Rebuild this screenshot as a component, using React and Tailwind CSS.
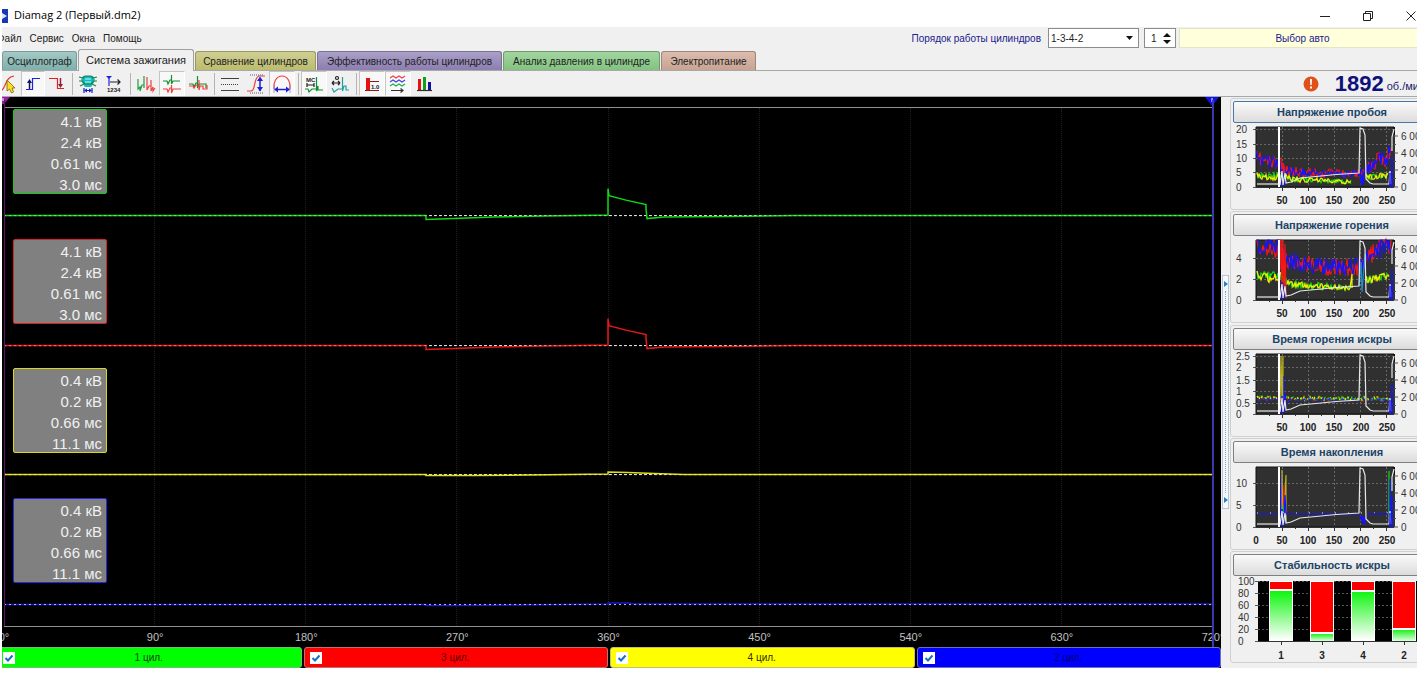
import React, { useState } from 'react';
import clsx from 'clsx';

const TABS = [
    { title: 'Осциллограф', color: 'bg-linear-to-b from-[#a3c9c5] to-[#7fb0ab] border-[#7d9a98]', width: 'w-[75px]' },
    { title: 'Система зажигания', active: true, width: 'w-[116px]' },
    { title: 'Сравнение цилиндров', color: 'bg-linear-to-b from-[#cfcf94] to-[#bcbc6c] border-[#98985f]', width: 'w-[121px]' },
    { title: 'Эффективность работы цилиндров', color: 'bg-linear-to-b from-[#aaa0c8] to-[#8c7eb0] border-[#7b7292]', width: 'w-[185px]' },
    { title: 'Анализ давления в цилиндре', color: 'bg-linear-to-b from-[#a2d6a0] to-[#82c280] border-[#729a70]', width: 'w-[157px]' },
    { title: 'Электропитание', color: 'bg-linear-to-b from-[#dbbcae] to-[#c8a392] border-[#a08578]', width: 'w-[95px]' },
];

const CYLINDERS = [
    { name: '1 цил.', stroke: '#10d818', border: 'border-[#10d010]', bar: 'bg-[#00ff00] border-[#70c070]', text: 'text-[#104010]', values: ['4.1 кВ', '2.4 кВ', '0.61 мс', '3.0 мс'], spark: 'high' },
    { name: '3 цил.', stroke: '#e81818', border: 'border-[#e02020]', bar: 'bg-[#ff0000] border-[#c07070]', text: 'text-[#600000]', values: ['4.1 кВ', '2.4 кВ', '0.61 мс', '3.0 мс'], spark: 'high' },
    { name: '4 цил.', stroke: '#e0e010', border: 'border-[#d8d818]', bar: 'bg-[#ffff00] border-[#c0c070]', text: 'text-[#303000]', values: ['0.4 кВ', '0.2 кВ', '0.66 мс', '11.1 мс'], spark: 'low' },
    { name: '2 цил.', stroke: '#1818d8', border: 'border-[#2828e0]', bar: 'bg-[#0000ff] border-[#7070c0]', text: 'text-[#000068]', values: ['0.4 кВ', '0.2 кВ', '0.66 мс', '11.1 мс'], spark: 'flat' },
];

const TRACES = {
    high: 'M0 108H422V112L450 111L490 109.500L540 108.500L604 107.500V81L605 88L622 92.500L642 97V101L643 111L660 109.500L720 109L790 108H1209',
    low: 'M0 108H422V109H470L604 107.500V105.500L624 106L650 107L680 108H1209',
    flat: 'M0 108H422V109H450L604 107.500V106.500H624L630 107.500H1209',
};

const DEGREES = ['0°', '90°', '180°', '270°', '360°', '450°', '540°', '630°', '720°'];

function random(seed) {
    let s = seed;
    return () => {
        s = (s * 16807) % 2147483647;
        return s / 2147483647;
    };
}

// noisy polyline through [x, y, spread] knots
function noise(knots, seed, step = 1) {
    const rnd = random(seed);
    const points = [];
    for (let i = 0; i < knots.length - 1; i++) {
        const [x0, y0, s0] = knots[i];
        const [x1, y1, s1] = knots[i + 1];
        for (let x = x0; x < x1; x += step) {
            const t = (x - x0) / (x1 - x0);
            const spread = s0 + (s1 - s0) * t;
            const y = y0 + (y1 - y0) * t + (rnd() * 2 - 1) * spread;
            points.push(`${x},${Math.max(0, Math.min(60, y)).toFixed(1)}`);
        }
    }
    return points.join(' ');
}

const HV_KNOTS = [[1, 32, 8], [22, 37, 7], [30, 44, 5], [64, 46, 4], [104, 46, 4], [118, 37, 8], [136, 26, 11]];
const LV_KNOTS = [[1, 49, 3], [32, 50, 4], [34, 52, 3], [96, 55, 2]];
const LV_TAIL = [[110, 50, 3], [133, 49, 3]];
const BURN_KNOTS = [[1, 1, 12], [22, 7, 12], [30, 20, 9], [70, 27, 9], [102, 27, 9], [112, 16, 10], [136, 2, 11]];

const CHARTS = [
    {
        title: 'Напряжение пробоя',
        focused: true,
        labels: [['20', 2], ['15', 17], ['10', 31], ['5', 45], ['0', 60]],
        lines: [
            { color: '#f01818', points: noise(HV_KNOTS, 11) },
            { color: '#1414ff', points: noise(HV_KNOTS, 27) },
            { color: '#10e010', points: noise(LV_KNOTS, 5) },
            { color: '#f0f000', points: noise(LV_KNOTS, 73) },
            { color: '#10e010', points: noise(LV_TAIL, 9) },
            { color: '#f0f000', points: noise(LV_TAIL, 19) },
            { color: '#f01818', points: noise([[23, 40, 9], [30, 44, 16]], 8) },
            { color: '#1414ff', points: '104,46 105,58 106,48 107,58 108,46' },
        ],
    },
    {
        title: 'Напряжение горения',
        labels: [['4', 18], ['2', 39], ['0', 60]],
        lines: [
            { color: '#f01818', points: noise(BURN_KNOTS, 13) },
            { color: '#1414ff', points: noise(BURN_KNOTS, 41) },
            { color: '#10e010', points: noise([[1, 36, 5], [28, 38, 6], [31, 43, 4], [60, 46, 4], [96, 48, 2]], 6) },
            { color: '#f0f000', points: noise([[1, 36, 5], [28, 38, 6], [31, 43, 4], [60, 46, 3], [95, 48, 2]], 71) + ' 96,34 96,48' },
            { color: '#10e010', points: noise([[110, 40, 4], [134, 36, 4]], 9) },
            { color: '#f0f000', points: noise([[110, 40, 4], [134, 36, 4]], 21) },
            { color: '#f01818', points: noise([[22, 20, 22], [30, 24, 26]], 8) },
            { color: '#f01818', points: '25,0 26,55 27,0 28,55 29,4 30,58' },
            { color: '#2090d0', points: '103,46 105,22 106,52 109,14' },
        ],
    },
    {
        title: 'Время горения искры',
        labels: [['2.5', 2], ['2', 13], ['1.5', 26], ['1', 37], ['0.5', 49], ['0', 60]],
        lines: [
            { color: '#f01818', dash: '2 6', points: noise([[1, 45, 2], [136, 46, 2]], 31) },
            { color: '#10e010', dash: '3 4', points: noise([[1, 44, 2], [136, 44, 2]], 32) },
            { color: '#f0f000', dash: '2 3', points: noise([[1, 44, 2], [136, 45, 2]], 33) },
            { color: '#2222ff', dash: '5 3', points: noise([[1, 46, 1], [136, 46, 1]], 34) },
            { color: '#b8b020', points: '24,50 25,2 26,50 27,2 27,56' },
            { color: '#1414ff', points: '28,22 28,58 29,40 30,52' },
        ],
    },
    {
        title: 'Время накопления',
        zero: true,
        labels: [['10', 16], ['5', 38], ['0', 60]],
        lines: [
            { color: '#1414ff', points: '1,47 23,47 24,8 25,50 26,20 27,55' },
            { color: '#b8b020', points: '26,50 26,3 27,54 28,40 30,8 30,55' },
            { color: '#f01818', points: '27,52 28,18 28,52 31,44' },
            { color: '#10e010', points: '26,54 27,38 28,56 30,48' },
            { color: '#1414ff', points: '28,50 29,28 30,47 103,47' },
            { color: '#1414ff', points: noise([[104, 53, 5], [111, 54, 5]], 4) },
            { color: '#f0f0f0', dash: '1 12', points: '1,46 136,46' },
            { color: '#1414ff', points: '111,47 133,47' },
            { color: '#10e010', points: '133,52 133,4' },
            { color: '#1414ff', points: '134,55 134,12 135,55' },
        ],
    },
];

const STABILITY = [
    { name: '1', x: 36, red: 8 },
    { name: '3', x: 77, red: 51 },
    { name: '4', x: 118, red: 9 },
    { name: '2', x: 159, red: 47 },
];

function ToolIcon({ children }) {
    return (
        <svg width="20" height="20" viewBox="0 0 20 20" fill="none" strokeWidth="1.2">
            {children}
        </svg>
    );
}

const TOOL_GROUPS = [
    [
        {
            label: 'Курсор', icon: (
                <>
                    <path d="M1 17C7 17 5 3 15 2" stroke="#e03030" />
                    <path d="M8 6V17L10.500 15L12.500 19L14.500 18L13 14H16Z" fill="#ffe020" stroke="#806000" strokeWidth="0.8" />
                </>
            ),
        },
        {
            label: 'Передний фронт', pressed: true, icon: (
                <>
                    <path d="M3 15.500H9.500V4.500H17" stroke="#2020e0" />
                    <path d="M6.500 15V7" stroke="#101070" strokeWidth="1.5" />
                    <path d="M4 9L6.500 5L9 9Z" fill="#101070" />
                </>
            ),
        },
        {
            label: 'Задний фронт', icon: (
                <>
                    <path d="M2 4.500H10.500V14.500H17" stroke="#e02020" />
                    <path d="M13.500 4V12" stroke="#902040" strokeWidth="1.5" />
                    <path d="M11 10L13.500 14L16 10Z" fill="#902040" />
                </>
            ),
        },
    ],
    [
        {
            label: 'Ширина сигнала', icon: (
                <>
                    <path d="M5 2H15L17 6L15 10L13 13H7L5 10L3 6Z" fill="#18b8b8" />
                    <path d="M1 3L5 4L7 2H13L15 4L19 3M1 7H4L7 10H13L16 7H19M2 12L6 10M14 10L18 12" stroke="#208050" />
                    <path d="M7 5H13M7 8H13" stroke="#70f0f0" strokeWidth="1.5" />
                    <path d="M6 14V19M14 14V19M7 16.500H13" stroke="#1020c0" />
                    <path d="M6 16.500L9 14.500V18.500ZM14 16.500L11 14.500V18.500Z" fill="#1020c0" />
                </>
            ),
        },
        {
            label: 'Отсчёты', icon: (
                <>
                    <path d="M2 2H8L5 5Z" fill="#2020e0" />
                    <path d="M5 3V12" stroke="#2020e0" />
                    <path d="M6 8H16M13.500 5.500L16 8L13.500 10.500" stroke="#202020" />
                    <text x="3" y="18" fontSize="6" fontWeight="bold" fontFamily="Liberation Sans, sans-serif" fill="#202020">1234</text>
                </>
            ),
        },
    ],
    [
        {
            label: 'Рядом', icon: (
                <>
                    <path d="M2 5V15L4 13V17L6 11H8V2V14" stroke="#20a040" />
                    <path d="M11 3V16L13 12H15V6V17L17 13V17L19 14" stroke="#f04040" />
                </>
            ),
        },
        {
            label: 'Друг под другом', pressed: true, icon: (
                <>
                    <path d="M1 7H5L6 10L8 6H9.500V1V10L11 7H18" stroke="#109030" />
                    <path d="M1 15H5L6 18L8 14H9.500V11V19L11 15H19" stroke="#f04040" />
                </>
            ),
        },
        {
            label: 'Наложение', icon: (
                <>
                    <path d="M1 10H5L6 13L8 9H9.500V2V14L11 10H18V14" stroke="#109030" />
                    <path d="M1 12H5L6 14L8 11H11V6V16L12 12H15V15H19V11" stroke="#f04040" />
                </>
            ),
        },
    ],
    [
        {
            label: 'Линии', icon: (
                <>
                    <path d="M1 4.500H19M1 16.500H19" stroke="#404040" />
                    <path d="M1 10.500H19" stroke="#404040" strokeDasharray="1 1" />
                </>
            ),
        },
        {
            label: 'Амплитуда', icon: (
                <>
                    <path d="M1 17H5C10 17 7 4 13 2H19" stroke="#f04040" />
                    <path d="M4 1H18M4 19H18" stroke="#606060" strokeDasharray="1 1" />
                    <path d="M14 4V17" stroke="#2020d0" strokeWidth="1.500" />
                    <path d="M11 7L14 2.500L17 7ZM11 13L14 17.500L17 13Z" fill="#2020d0" />
                </>
            ),
        },
        {
            label: 'Длительность', pressed: true, icon: (
                <>
                    <path d="M2 15C1 9 4 2 10 2C16 2 19 9 18 15" stroke="#f04040" />
                    <path d="M2 11V19M18 11V19" stroke="#8080d0" strokeWidth="0.700" />
                    <path d="M4 15.500H16" stroke="#2020d0" strokeWidth="1.500" />
                    <path d="M2 15.500L6 12.500V18.500ZM18 15.500L14 12.500V18.500Z" fill="#2020d0" />
                </>
            ),
        },
    ],
    [
        {
            label: 'Миллисекунды', pressed: true, icon: (
                <>
                    <text x="2" y="8" fontSize="6" fontWeight="bold" fontFamily="Liberation Sans, sans-serif" fill="#202020">МС</text>
                    <path d="M3 9V13M10 9V13M3 11H10" stroke="#202020" />
                    <path d="M1 15H4L5 18L8 15H12.500V3V17L14 12V16H19" stroke="#109030" />
                </>
            ),
        },
        {
            label: 'Градусы', icon: (
                <>
                    <circle cx="7" cy="4" r="1.500" stroke="#202020" />
                    <path d="M2 9H10M2 9L4 7M2 9L4 11M10 9L8 7M10 9L8 11" stroke="#202020" />
                    <path d="M2 14L4 18L8 15H12.500V3V17L14 12H16V16H19" stroke="#20a0a0" />
                </>
            ),
        },
    ],
    [
        {
            label: 'Значения', pressed: true, icon: (
                <>
                    <path d="M4 4H8V16H4Z" fill="#e81010" />
                    <path d="M3 16.500H17M8 7.500H17" stroke="#802020" />
                    <text x="9" y="15" fontSize="6" fontWeight="bold" fontFamily="Liberation Sans, sans-serif" fill="#202020">1.0</text>
                </>
            ),
        },
        {
            label: 'Сигналы', pressed: true, icon: (
                <>
                    <path d="M2 4L5 2L8 4L11 2L14 4L17 2" stroke="#f04040" />
                    <path d="M2 8L5 6L8 8L11 6L14 8L17 6" stroke="#4040f0" />
                    <path d="M2 12L5 10L8 12L11 10L14 12L17 10" stroke="#20b040" />
                    <path d="M3 16.500H15M12.500 14.500L15 16.500L12.500 18.500" stroke="#303030" />
                </>
            ),
        },
        {
            label: 'Диаграмма', icon: (
                <>
                    <path d="M4 5H7V16H4Z" fill="#e81010" />
                    <path d="M9 3H12V16H9Z" fill="#10a020" />
                    <path d="M14 8H17V16H14Z" fill="#1010a0" />
                    <path d="M3 16.500H18" stroke="#303030" />
                </>
            ),
        },
    ],
];

function TitleBar() {
    return (
        <header className="flex h-[27px] items-center bg-white pt-1 text-black">
            <svg width="7" height="14" viewBox="0 0 7 14" className="shrink-0">
                <path d="M0 0H6V14H0Z" fill="#1838b8" />
                <path d="M0 4L5 7L0 10Z" fill="#e0e8ff" />
            </svg>
            <h1 className="ml-[5px] font-['Open_Sans',sans-serif] text-[11px]">Diamag 2 (Первый.dm2)</h1>
            <div className="ml-auto flex gap-[31px]">
                <button aria-label="Свернуть" className="flex h-3 w-3 items-center">
                    <svg width="12" height="12" viewBox="0 0 12 12"><path d="M1 6.500H11" stroke="#222" /></svg>
                </button>
                <button aria-label="Восстановить" className="h-3 w-3">
                    <svg width="12" height="12" viewBox="0 0 12 12" fill="none" stroke="#222">
                        <path d="M1.500 3.500H8.500V10.500H1.500ZM3.500 3.500V1.500H10.500V8.500H8.500" />
                    </svg>
                </button>
                <button aria-label="Закрыть" className="h-3 w-3">
                    <svg width="12" height="12" viewBox="0 0 12 12"><path d="M1.500 1.500L10.500 10.500M10.500 1.500L1.500 10.500" stroke="#222" /></svg>
                </button>
            </div>
        </header>
    );
}

function MenuBar() {
    const [order, setOrder] = useState('1-3-4-2');
    const [count, setCount] = useState(1);

    return (
        <div className="flex h-[22px] items-center text-[10px]">
            <nav className="-ml-[5px] flex gap-2 text-[#222]">
                <button>Файл</button>
                <button>Сервис</button>
                <button>Окна</button>
                <button>Помощь</button>
            </nav>
            <div className="-mr-[9px] ml-auto flex items-center">
                <label htmlFor="order" className="mr-[7px] text-[#20208c]">Порядок работы цилиндров</label>
                <div className="relative mr-[5px]">
                    <select
                        id="order"
                        value={order}
                        onChange={(e) => setOrder(e.target.value)}
                        className="block h-5 w-[91px] appearance-none border border-[#8c8c8c] bg-white pl-[2px] text-[10px] text-[#222]"
                    >
                        <option>1-3-4-2</option>
                        <option>1-2-4-3</option>
                    </select>
                    <svg width="7" height="4" viewBox="0 0 7 4" className="pointer-events-none absolute top-2 right-[6px]">
                        <path d="M0 0H7L3.500 4Z" fill="#111" />
                    </svg>
                </div>
                <div className="mr-[3px] flex h-5 w-[32px] items-center border border-[#8c8c8c] bg-white">
                    <input
                        type="text"
                        aria-label="Номер цилиндра"
                        value={count}
                        onChange={(e) => setCount(e.target.value)}
                        className="w-[18px] pl-[6px] text-[10px] text-[#222]"
                    />
                    <div className="flex flex-col gap-[3px]">
                        <button aria-label="Больше" onClick={() => setCount(Number(count) + 1)}>
                            <svg width="8" height="4" viewBox="0 0 8 4" className="block"><path d="M0 4H8L4 0Z" fill="#111" /></svg>
                        </button>
                        <button aria-label="Меньше" onClick={() => setCount(Number(count) - 1)}>
                            <svg width="8" height="4" viewBox="0 0 8 4" className="block"><path d="M0 0H8L4 4Z" fill="#111" /></svg>
                        </button>
                    </div>
                </div>
                <button className="h-5 w-[247px] border border-[#e4e4c8] bg-[#ffffdc] text-[#20208c]">Выбор авто</button>
            </div>
        </div>
    );
}

function Tabs() {
    return (
        <div className="flex h-[22px] items-end gap-px border-b border-[#a8a8a8] text-[10px] text-[#222]">
            {TABS.map((tab) => (
                <button
                    key={tab.title}
                    className={clsx(
                        'shrink-0 rounded-t-[3px] border border-b-0 whitespace-nowrap',
                        tab.width,
                        tab.active ? '-mb-px h-[22px] border-[#a0a0a0] bg-[#f0f0f0] text-[11px]' : 'h-[19px]',
                        tab.color
                    )}
                >
                    {tab.title}
                </button>
            ))}
        </div>
    );
}

function Toolbar() {
    return (
        <div className="flex h-[26px] items-center border-b border-[#a8a8a8]">
            <div className="-ml-[5px] flex shrink-0 items-center">
                {TOOL_GROUPS.map((group, i) => (
                    <React.Fragment key={i}>
                        {i > 0 && <span className="mr-[2px] ml-[3px] h-[22px] w-px bg-[#b4b4b4]" />}
                        {group.map((tool) => (
                            <button
                                key={tool.label}
                                aria-label={tool.label}
                                className={clsx(
                                    'flex h-[25px] items-center justify-center border',
                                    i === 0 ? 'w-[24px]' : 'w-[26px]',
                                    tool.pressed ? 'border-white border-t-[#c4c4c4] border-l-[#c4c4c4] bg-[#f8f8f8]' : 'border-transparent'
                                )}
                            >
                                <ToolIcon>{tool.icon}</ToolIcon>
                            </button>
                        ))}
                    </React.Fragment>
                ))}
            </div>
            <div className="-mr-[8px] ml-auto flex shrink-0 items-center">
                <svg width="16" height="16" viewBox="0 0 16 16" className="mr-4">
                    <circle cx="8" cy="8" r="7.500" fill="#e05018" />
                    <path d="M7 3H9L8.700 9H7.300ZM7 10.500H9V12.500H7Z" fill="#fff" />
                </svg>
                <span className="text-[22px] leading-6 font-bold text-[#10107c]">1892</span>
                <span className="ml-[3px] pt-[6px] text-[11px] text-[#20206c]">об./мин</span>
            </div>
        </div>
    );
}

function Lane({ cylinder }) {
    return (
        <div className="relative min-h-0 pt-px">
            <svg
                viewBox="0 0 1209 130"
                preserveAspectRatio="none"
                className="absolute inset-0 h-full w-full"
                fill="none"
            >
                {cylinder.spark !== 'flat' && (
                    <path d="M0 108H1209" stroke="#e0e0e0" strokeDasharray="3 2" vectorEffect="non-scaling-stroke" />
                )}
                <path d={TRACES[cylinder.spark]} stroke={cylinder.stroke} strokeWidth="1.500" vectorEffect="non-scaling-stroke" />
                <path
                    d="M0 108H1209"
                    stroke={cylinder.spark === 'flat' ? '#c0c0f0' : '#fff'}
                    strokeOpacity={cylinder.spark === 'flat' ? 1 : 0.4}
                    strokeDasharray="2 3"
                    vectorEffect="non-scaling-stroke"
                />
            </svg>
            <div className={clsx('relative ml-[9px] h-[85px] w-[94px] overflow-hidden rounded-[2px] border bg-[#808080] pt-px pr-[4px] text-right text-[15px] leading-[21px] text-[#f0f0f0]', cylinder.border)}>
                {cylinder.values.map((value) => <p key={value}>{value}</p>)}
            </div>
        </div>
    );
}

function Scope() {
    return (
        <main className="flex min-w-0 flex-1 flex-col overflow-hidden bg-black">
            <div className="flex h-[10px] items-start justify-between">
                <svg width="8" height="7" viewBox="0 0 8 7"><path d="M0 0H8L2 7H0Z" fill="#a018a8" /><path d="M1 1V4" stroke="#fff" /></svg>
                <svg width="14" height="8" viewBox="0 0 14 8" className="mr-[2px]"><path d="M0 0H14L8 8H6Z" fill="#1010e8" /><path d="M7 1V5" stroke="#fff" /></svg>
            </div>
            <div className="relative mr-2 ml-[2px] flex flex-1 flex-col border-y border-[#909090]">
                <div className="absolute inset-0 grid grid-cols-8">
                    {DEGREES.slice(1).map((d) => <span key={d} className="border-r border-dotted border-[#1e1e1e]" />)}
                </div>
                <div className="relative grid flex-1 grid-rows-4">
                    {CYLINDERS.map((c) => <Lane key={c.name} cylinder={c} />)}
                </div>
                <span className="absolute -top-2 bottom-0 left-0 w-px bg-[#601068]" />
                <span className="absolute -top-2 -right-px -bottom-[22px] w-[2px] bg-[#3838b0]" />
            </div>
            <div className="mr-2 ml-[2px] flex h-[20px] justify-between pt-[2px] text-[11px] leading-4 text-[#c0c0c0]">
                {DEGREES.map((d) => <span key={d} className="flex w-0 justify-center">{d}</span>)}
            </div>
            <div className="-ml-[5px] grid grid-cols-4 gap-[2px]">
                {CYLINDERS.map((c) => (
                    <label key={c.name} className={clsx('relative flex h-[21px] items-center rounded-[3px] border text-[10px]', c.bar, c.text)}>
                        <input
                            type="checkbox"
                            defaultChecked
                            className="peer ml-[5px] h-3 w-3 appearance-none bg-white"
                        />
                        <svg width="12" height="12" viewBox="0 0 12 12" fill="none" className="pointer-events-none absolute left-[5px] hidden peer-checked:block">
                            <path d="M2.500 6L5 8.500L9.500 3.500" stroke="#1870c0" strokeWidth="2" />
                        </svg>
                        <span className="flex-1 pr-[18px] text-center">{c.name}</span>
                    </label>
                ))}
            </div>
        </main>
    );
}

function Splitter() {
    return (
        <div className="flex w-[9px] shrink-0 items-center pt-[18px]">
            <button aria-label="Свернуть панель" className="ml-px flex h-[234px] w-[7px] flex-col items-center justify-between border border-[#b8c4d0] bg-[#f4f8fc] py-[5px]">
                <svg width="4" height="6" viewBox="0 0 4 6"><path d="M0 0L4 3L0 6Z" fill="#2080d0" /></svg>
                <span className="my-1 w-0 flex-1 border-l border-dotted border-[#80a0c0]" />
                <svg width="4" height="6" viewBox="0 0 4 6"><path d="M0 0L4 3L0 6Z" fill="#2080d0" /></svg>
            </button>
        </div>
    );
}

function Card({ title, focused, children }) {
    return (
        <section className="w-[204px] rounded-[3px] border border-[#d0d0d0] p-[2px] pb-0">
            <button
                className={clsx(
                    'block h-[22px] w-full rounded-[2px] border bg-linear-to-b from-[#fafafa] to-[#dcdcdc] text-[11px] leading-4 font-bold text-[#1c4468]',
                    focused ? 'border-[#4878a8]' : 'border-[#808080]'
                )}
            >
                {title}
            </button>
            {children}
        </section>
    );
}

function MiniChart({ chart }) {
    return (
        <svg width="196" height="86" viewBox="-1 -1 196 86" className="block font-['Liberation_Sans',sans-serif] text-[10px]" fill="#333">
            {chart.labels.map(([label, y]) => (
                <g key={label}>
                    <text x="2" y={y + 7}>{label}</text>
                    <path d={`M19 ${y + 3.5}H22`} stroke="#555" />
                </g>
            ))}
            <g transform="translate(22 3)">
                <path d="M0 0H138V60H0Z" fill="#303030" stroke="#111" />
                {chart.labels.map(([label, y]) => (
                    <path key={label} d={`M0 ${y + 0.5}H138`} stroke="#686868" strokeDasharray="2 2" />
                ))}
                <path d="M26.500 0V60M52.500 0V60M78.500 0V60M104.500 0V60M130.500 0V60" stroke="#686868" strokeDasharray="2 2" />
                <g fill="none" strokeWidth="1.200">
                    {chart.lines.map((line, i) => (
                        <polyline key={i} points={line.points} stroke={line.color} strokeDasharray={line.dash} />
                    ))}
                    <path d="M1 57H22" stroke="#e8e8e8" />
                    <path d="M23 0V60" stroke="#fff" strokeWidth="2" />
                    <path d="M26 60V42M28 58V46" stroke="#1414ff" strokeWidth="1.500" />
                    <path d="M24 58L26 44L27 58L29 46L30 56L35 55L44 51L60 49.500L80 47.500L103 46L104 1L107 2L109 8L110 52L114 56L117 57H133L134 44L135 57" stroke="#e8e8e8" />
                    <path d="M134 60V46M136 60V30" stroke="#1414ff" strokeWidth="1.500" />
                    <path d="M138 0V60" stroke="#101010" strokeWidth="2" />
                    <path d="M136 24V10L138 2" stroke="#e8e8e8" />
                </g>
                <path d="M138 60V8M138 60H142M138 43H142M138 26H142M138 9H142M138 51.500H140M138 34.500H140M138 17.500H140" stroke="#555" />
                <path d="M0 60.500H138M26.500 60V64M52.500 60V64M78.500 60V64M104.500 60V64M130.500 60V64M13.500 60V62M39.500 60V62M65.500 60V62M91.500 60V62M117.500 60V62" stroke="#333" />
            </g>
            {[['6 000', 16], ['4 000', 33], ['2 000', 50], ['0', 67]].map(([label, y]) => (
                <text key={label} x="167" y={y}>{label}</text>
            ))}
            <g fontWeight="bold" textAnchor="middle" fill="#222">
                {chart.zero && <text x="22" y="80">0</text>}
                <text x="48" y="80">50</text>
                <text x="74" y="80">100</text>
                <text x="100" y="80">150</text>
                <text x="127" y="80">200</text>
                <text x="153" y="80">250</text>
            </g>
        </svg>
    );
}

function StabilityChart() {
    return (
        <svg width="196" height="86" viewBox="-1 -2 196 86" className="block font-['Liberation_Sans',sans-serif] text-[10px]" fill="#333">
            <defs>
                <linearGradient id="ok" gradientUnits="userSpaceOnUse" x1="0" y1="10" x2="0" y2="62">
                    <stop offset="0" stopColor="#00f400" />
                    <stop offset="1" stopColor="#ffffff" />
                </linearGradient>
                <linearGradient id="okShort" x1="0" y1="0" x2="0" y2="1">
                    <stop offset="0" stopColor="#20f020" />
                    <stop offset="1" stopColor="#e0ffe0" />
                </linearGradient>
            </defs>
            <path d="M24 3H196V63H24Z" fill="#000" />
            {[100, 80, 60, 40, 20, 0].map((v, i) => (
                <g key={v}>
                    <text x="4" y={7 + i * 12}>{v}</text>
                    <path d={`M21 ${3.5 + i * 12}H24`} stroke="#555" />
                    <path d={`M24 ${3.5 + i * 12}H196`} stroke="#555" strokeDasharray="2 2" />
                </g>
            ))}
            {STABILITY.map((bar) => (
                <g key={bar.name}>
                    <rect x={bar.x - 1} y="3" width="24" height="60" fill="#fff" />
                    <rect x={bar.x} y="4" width="22" height={bar.red - 1} fill="#ff0000" />
                    <rect x={bar.x} y={bar.red + 5} width="22" height={58 - bar.red} fill={bar.red > 20 ? 'url(#okShort)' : 'url(#ok)'} />
                    <text x={bar.x + 11} y="81" fontWeight="bold" textAnchor="middle" fill="#222">{bar.name}</text>
                    <path d={`M${bar.x + 11.5} 63V67`} stroke="#333" />
                </g>
            ))}
            <path d="M24 63.500H196" stroke="#333" />
        </svg>
    );
}

export default function App() {
    return (
        <div className="flex min-h-screen flex-col overflow-hidden bg-white pb-[5px] pl-[2px] font-['Liberation_Sans',Arial,sans-serif]">
            <TitleBar />
            <div className="flex flex-1 flex-col overflow-hidden bg-[#f0f0f0]">
                <MenuBar />
                <Tabs />
                <Toolbar />
                <div className="flex flex-1">
                    <Scope />
                    <Splitter />
                    <aside className="flex w-[187px] shrink-0 flex-col justify-between overflow-hidden pt-px pb-[5px]">
                        {CHARTS.map((chart) => (
                            <Card key={chart.title} title={chart.title} focused={chart.focused}>
                                <MiniChart chart={chart} />
                            </Card>
                        ))}
                        <Card title="Стабильность искры">
                            <StabilityChart />
                        </Card>
                    </aside>
                </div>
            </div>
        </div>
    );
}
